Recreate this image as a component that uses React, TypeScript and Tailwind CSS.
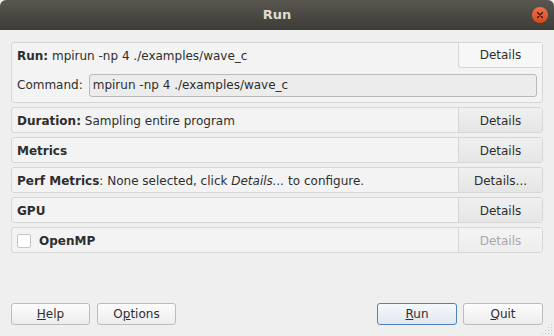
const FONT = { fontFamily: '"DejaVu Sans", "Liberation Sans", sans-serif' };

type Row = {
  label: React.ReactNode;
  action: string;
  disabled?: boolean;
  checkbox?: boolean;
};

const ROWS: Row[] = [
  {
    label: (
      <>
        <b>Duration:</b> Sampling entire program
      </>
    ),
    action: 'Details',
  },
  { label: <b>Metrics</b>, action: 'Details' },
  {
    label: (
      <>
        <b>Perf Metrics</b>: None selected, click <i>Details...</i> to configure.
      </>
    ),
    action: 'Details...',
  },
  { label: <b>GPU</b>, action: 'Details' },
  { label: <b>OpenMP</b>, action: 'Details', disabled: true, checkbox: true },
];

function DialogButton({
  children,
  primary,
  className = '',
}: {
  children: React.ReactNode;
  primary?: boolean;
  className?: string;
}) {
  return (
    <button
      className={
        'h-[22px] rounded-[3px] border text-[12px] leading-none text-[#2e2e2e] ' +
        (primary
          ? 'border-[#4f83b6] bg-gradient-to-b from-[#f6f9fc] to-[#dfe7ef] '
          : 'border-[#bcbcbc] bg-gradient-to-b from-[#fdfdfd] to-[#ececec] ') +
        className
      }
    >
      {children}
    </button>
  );
}

export default function App() {
  return (
    <div
      className="w-[554px] h-[336px] bg-[#efefef] flex flex-col overflow-hidden relative text-[12px] text-[#2e2e2e]"
      style={FONT}
    >
      {/* ── Title bar ───────────────────────────────────────────── */}
      <div className="h-[30px] shrink-0 rounded-t-[6px] bg-gradient-to-b from-[#59564f] to-[#3d3c37] relative flex items-center justify-center">
        <span className="text-[13px] font-bold text-[#dfdbd2]">Run</span>
        <div className="absolute right-[6px] top-[7px] w-[16px] h-[16px] rounded-full bg-gradient-to-b from-[#f0704a] to-[#d9481c] flex items-center justify-center">
          <svg width="8" height="8" viewBox="0 0 8 8">
            <path d="M1.5 1.5 L6.5 6.5 M6.5 1.5 L1.5 6.5" stroke="#3a1a10" strokeWidth="1.3" strokeLinecap="round" />
          </svg>
        </div>
      </div>

      {/* ── Body ────────────────────────────────────────────────── */}
      <div className="flex-1 flex flex-col px-[11px] pt-[12px] pb-[11px]">
        {/* Run panel */}
        <div className="h-[61px] rounded-[3px] border border-[#d6d6d6] bg-[#f3f3f3] flex flex-col">
          <div className="h-[25px] flex">
            <div className="flex-1 flex items-center pl-[5px] pt-[1px]">
              <b>Run:</b>&nbsp;mpirun -np 4 ./examples/wave_c
            </div>
            <div className="w-[84px] flex items-center justify-center border-l border-b border-[#d6d6d6] rounded-bl-[3px] bg-[#f7f7f7]">
              Details
            </div>
          </div>
          <div className="flex-1 flex items-center pl-[5px] pr-[5px] gap-[6px]">
            <span>Command:</span>
            <div className="flex-1 h-[23px] rounded-[3px] border border-[#b9b9b9] bg-[#ececec] flex items-center pl-[3px]">
              mpirun -np 4 ./examples/wave_c
            </div>
          </div>
        </div>

        {/* Option rows */}
        <div className="flex flex-col gap-[4px] mt-[4px]">
          {ROWS.map((row, i) => (
            <div
              key={i}
              className="h-[26px] rounded-[3px] border border-[#d6d6d6] bg-[#f3f3f3] flex overflow-hidden"
            >
              <div className="flex-1 flex items-center pl-[5px] pt-[1px] gap-[8px]">
                {row.checkbox && (
                  <span className="w-[14px] h-[14px] rounded-[2px] border border-[#c4c4c4] bg-white" />
                )}
                <span>{row.label}</span>
              </div>
              <div
                className={
                  'w-[84px] flex items-center justify-center pt-[1px] border-l border-[#d6d6d6] bg-gradient-to-b ' +
                  (row.disabled
                    ? 'from-[#f4f4f4] to-[#ededed] text-[#a8a8a8]'
                    : 'from-[#f0f0f0] to-[#e5e5e5]')
                }
              >
                {row.action}
              </div>
            </div>
          ))}
        </div>

        {/* Dialog buttons */}
        <div className="mt-auto flex items-center">
          <DialogButton className="w-[79px]">
            <u>H</u>elp
          </DialogButton>
          <DialogButton className="w-[79px] ml-[7px]">
            O<u>p</u>tions
          </DialogButton>
          <div className="flex-1" />
          <DialogButton primary className="w-[80px]">
            <u>R</u>un
          </DialogButton>
          <DialogButton className="w-[80px] ml-[6px]">
            <u>Q</u>uit
          </DialogButton>
        </div>
      </div>

      {/* size grip */}
      <svg className="absolute right-[1px] bottom-[1px]" width="11" height="11" viewBox="0 0 11 11">
        {[
          [9, 1], [9, 4], [6, 4], [9, 7], [6, 7], [3, 7], [9, 10], [6, 10], [3, 10], [0, 10],
        ].map(([x, y], i) => (
          <rect key={i} x={x} y={y - 1} width="1" height="1" fill="#c4c4c4" />
        ))}
      </svg>
    </div>
  );
}
